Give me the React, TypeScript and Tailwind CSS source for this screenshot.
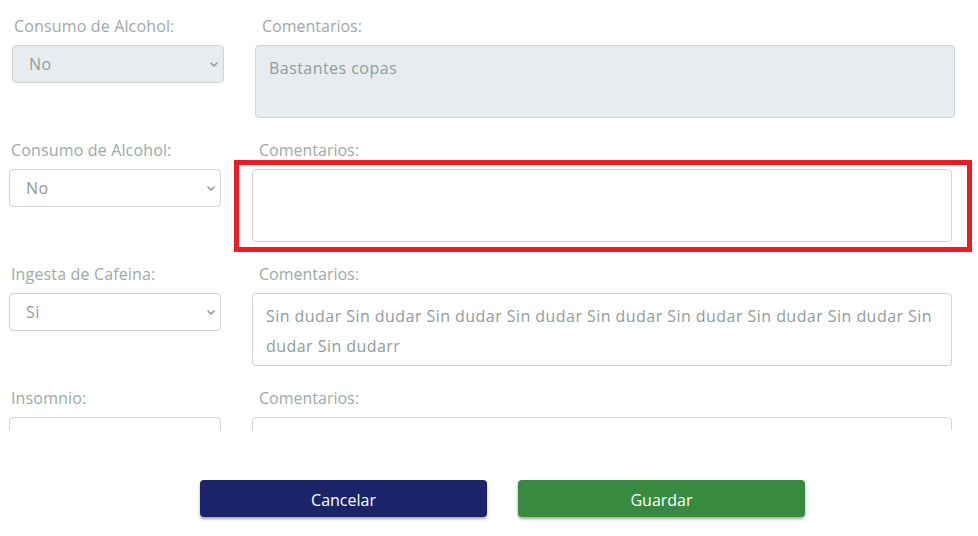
import { useState } from "react";

const Chevron = () => (
  <svg width="8" height="5" viewBox="0 0 8 5" className="text-[#8a9898]">
    <path d="M1 1l3 3 3-3" fill="none" stroke="currentColor" strokeWidth="1.5" strokeLinecap="round" strokeLinejoin="round" />
  </svg>
);

type RowProps = {
  label: string;
  value: string;
  comment: string;
  disabled?: boolean;
  highlight?: boolean;
  shift?: boolean;
};

function Row({ label, value, comment, disabled, highlight, shift }: RowProps) {
  const field = disabled ? "bg-[#e9ecef]" : "bg-white";
  return (
    <div className={`flex gap-[31px] ${shift ? "pl-[12px] pr-[23px]" : "pl-[9px] pr-[26px]"}`}>
      <div className="w-[212px] shrink-0">
        <p className="mb-[9px] h-[20px] pl-[2px] text-[16px] leading-[20px] tracking-[0.15px] text-[#9ea9a9]">{label}</p>
        <div
          className={`flex h-[38px] items-center justify-between rounded-[4px] border border-[#ced4da] pl-[16px] pr-[5px] text-[16px] tracking-[0.4px] text-[#8f9c9c] ${field}`}
        >
          <span>{value}</span>
          <Chevron />
        </div>
      </div>
      <div className="flex-1">
        <p className="mb-[9px] h-[20px] pl-[7px] text-[16px] leading-[20px] text-[#9ea9a9]">Comentarios:</p>
        <div className="relative">
          <div
            className={`h-[73px] rounded-[4px] border border-[#ced4da] pl-[13px] pr-[8px] pt-[7px] text-[16px] leading-[30px] tracking-[0.45px] text-[#8f9c9c] ${field}`}
          >
            {comment}
          </div>
          {highlight && (
            <div className="pointer-events-none absolute -left-[18px] -right-[20px] -top-[9px] -bottom-[10px] border-[5px] border-[#ec1c24]" />
          )}
        </div>
      </div>
    </div>
  );
}

export default function App() {
  const [rows] = useState<RowProps[]>([
    { label: "Consumo de Alcohol:", value: "No", comment: "Bastantes copas", disabled: true, shift: true },
    { label: "Consumo de Alcohol:", value: "No", comment: "", highlight: true },
    {
      label: "Ingesta de Cafeina:",
      value: "Si",
      comment:
        "Sin dudar Sin dudar Sin dudar Sin dudar Sin dudar Sin dudar Sin dudar Sin dudar Sin dudar Sin dudarr",
    },
    { label: "Insomnio:", value: "", comment: "" },
  ]);

  return (
    <div className="h-[536px] w-[978px] overflow-hidden bg-white font-['Open_Sans',sans-serif]">
      <div className="h-[430px] overflow-hidden pt-[16px]">
        <div className="flex flex-col gap-[22px]">
          {rows.map((r, i) => (
            <Row key={i} {...r} />
          ))}
        </div>
      </div>
      <div className="mt-[50px] flex gap-[31px] pl-[200px]">
        <button className="h-[37px] w-[287px] rounded-[4px] bg-[#1c2469] pt-[2px] text-[16px] font-medium text-white shadow-[0_2px_3px_rgba(0,0,0,0.35)]">
          Cancelar
        </button>
        <button className="h-[37px] w-[287px] rounded-[4px] bg-[#378a40] pt-[2px] text-[16px] font-medium text-white shadow-[0_2px_3px_rgba(0,0,0,0.35)]">
          Guardar
        </button>
      </div>
    </div>
  );
}
